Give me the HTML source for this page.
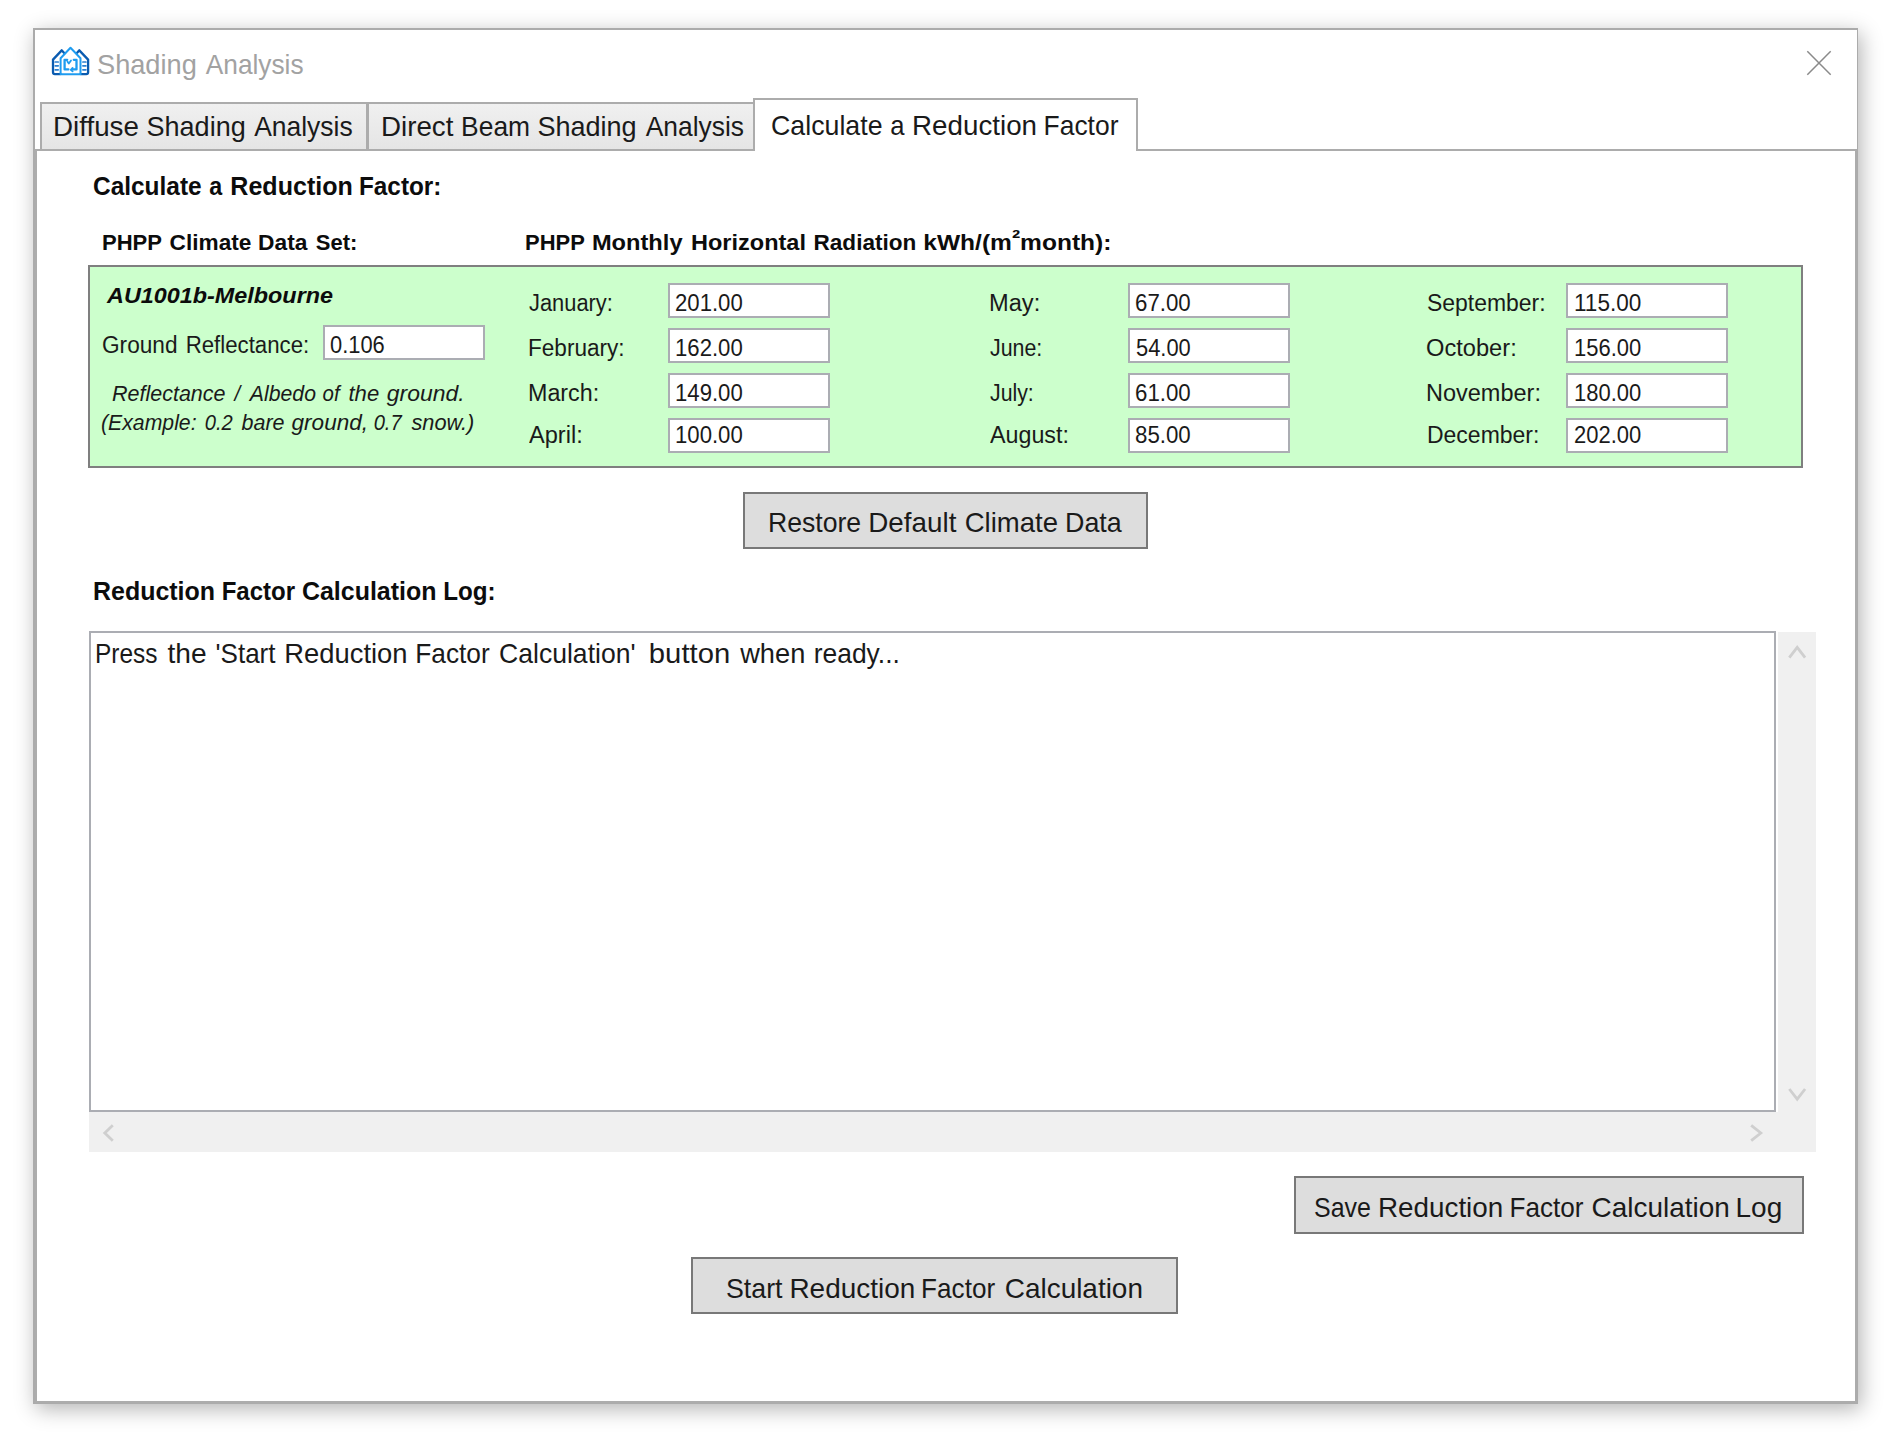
<!DOCTYPE html>
<html lang="en">
<head>
<meta charset="utf-8">
<title>Shading Analysis</title>
<style>
html,body{margin:0;padding:0}
body{width:1898px;height:1442px;background:#fff;position:relative;overflow:hidden;font-family:"Liberation Sans",sans-serif;color:#000}
body>*{position:absolute;box-sizing:border-box}
.t{white-space:nowrap;transform-origin:0 50%;display:block}
.t span{display:inline-block;transform-origin:0 50%}
.win{left:33px;top:28px;width:1825px;height:1376px;background:#fff;border:solid #ababab;border-width:2px 1px 1px 2px;box-shadow:3px 5px 20px rgba(0,0,0,.30)}
.pane{left:35px;top:149px;width:1822px;height:1254px;border:2px solid #acacac;background:#fff}
.tab{border:2px solid #acacac;background:linear-gradient(#f0f0f0,#e5e5e5)}
.tabsel{border:2px solid #acacac;border-bottom:none;background:#fff}
.green{left:88px;top:265px;width:1715px;height:203px;border:2px solid #7f7f7f;background:#ccffcc}
.in{border:2px solid #abadb3;background:#fff;width:162px;height:35px}
.btn{border:2px solid #787878;background:#dddddd}
.log{left:89px;top:631px;width:1687px;height:481px;border:2px solid #abadb3;background:#fff}
.sb{background:#f0f0f0}
</style>
</head>
<body>
<div class="win"></div>
<!-- title icon -->
<svg style="left:48px;top:44px" width="46" height="34" viewBox="48 44 46 34" fill="none" stroke-linejoin="round" stroke-linecap="round">
<path d="M61.7 50.4 L53 59.6 V72.2 Q53 74.1 54.9 74.1 H60.4 M64.2 53 L61.7 50.4" stroke="#0a5bb0" stroke-width="2.3"/>
<path d="M79.3 50.4 L88.1 59.6 V72.2 Q88.1 74.1 86.2 74.1 H80.7 M76.9 53 L79.3 50.4" stroke="#0a5bb0" stroke-width="2.3"/>
<path d="M55.2 62 H58.2 M55.2 65.8 H58.2 M55.2 69.8 H58.2 M82.9 62 H85.9 M82.9 65.8 H85.9 M82.9 69.8 H85.9" stroke="#2a7fd0" stroke-width="1.7"/>
<path d="M60.6 74.2 V58.2 L70.5 47.7 L80.5 58.2 V74.2 Z" stroke="#1f9cf0" stroke-width="2"/>
<path d="M67.2 59.8 H64.6 V69.4 H68.4 M73.8 59.8 H76.5 V69.4 H72.8" stroke="#1f9cf0" stroke-width="2.3"/>
<path d="M67.4 61.4 L68.8 63.6 L71 60.4 M72.6 68 L70.8 69.8 L72.6 71.4" stroke="#1f9cf0" stroke-width="1.8"/>
</svg>
<!-- close X -->
<svg style="left:1803px;top:47px" width="32" height="32" viewBox="1803 47 32 32" fill="none">
<path d="M1807.3 51.3 L1830.7 74.7 M1830.7 51.3 L1807.3 74.7" stroke="#8a8a8a" stroke-width="1.5"/>
</svg>
<!-- tabs -->
<div class="pane"></div>
<div class="tab" style="left:40px;top:102px;width:328px;height:49px"></div>
<div class="tab" style="left:367px;top:102px;width:388px;height:49px"></div>
<div style="left:37px;top:149px;width:716px;height:2px;background:#acacac"></div>
<div class="tabsel" style="left:753px;top:98px;width:385px;height:53px"></div>
<!-- green panel -->
<div class="green"></div>
<div class="in" style="left:323px;top:325px"></div>
<div class="in" style="left:668px;top:283px"></div>
<div class="in" style="left:668px;top:328px"></div>
<div class="in" style="left:668px;top:373px"></div>
<div class="in" style="left:668px;top:418px"></div>
<div class="in" style="left:1128px;top:283px"></div>
<div class="in" style="left:1128px;top:328px"></div>
<div class="in" style="left:1128px;top:373px"></div>
<div class="in" style="left:1128px;top:418px"></div>
<div class="in" style="left:1566px;top:283px"></div>
<div class="in" style="left:1566px;top:328px"></div>
<div class="in" style="left:1566px;top:373px"></div>
<div class="in" style="left:1566px;top:418px"></div>
<!-- buttons -->
<div class="btn" style="left:743px;top:492px;width:405px;height:57px"></div>
<div class="btn" style="left:1294px;top:1176px;width:510px;height:58px"></div>
<div class="btn" style="left:691px;top:1257px;width:487px;height:57px"></div>
<!-- log -->
<div class="log"></div>
<div class="sb" style="left:1778px;top:632px;width:38px;height:480px"></div>
<div class="sb" style="left:89px;top:1112px;width:1727px;height:40px"></div>
<svg style="left:1778px;top:632px" width="38" height="520" viewBox="1778 632 38 520" fill="none" stroke="#cfcfcf" stroke-width="2.8">
<path d="M1789.3 657.6 L1797.2 647.4 L1805.1 657.6"/>
<path d="M1789.3 1089 L1797.2 1099.2 L1805.1 1089"/>
</svg>
<svg style="left:89px;top:1113px" width="1727" height="39" viewBox="89 1113 1727 39" fill="none" stroke="#cfcfcf" stroke-width="2.8">
<path d="M112.8 1125.3 L104.8 1133 L112.8 1140.7"/>
<path d="M1751.2 1125.3 L1760.8 1133 L1751.2 1140.7"/>
</svg>
<span class="t" style="left:96.76px;top:48px;font-size:28.5px;line-height:32px;transform:scaleX(0.9376);color:#a2a2a2"><span style="transform:scaleX(1.0173)">Shading</span> <span style="transform:scaleX(0.9832);margin-left:3.59px">Analysis</span></span>
<span class="t" style="left:53.30px;top:110px;font-size:28.5px;line-height:32px;transform:scaleX(0.9488);color:#1a1a1a"><span style="transform:scaleX(1.0264)">Diffuse</span> <span style="margin-left:2.44px">Shading</span> <span style="transform:scaleX(0.9786);margin-left:0.84px">Analysis</span></span>
<span class="t" style="left:380.62px;top:110px;font-size:28.5px;line-height:32px;transform:scaleX(0.9422);color:#1a1a1a"><span style="transform:scaleX(1.0320)">Direct</span> <span style="transform:scaleX(0.9831);margin-left:2.66px">Beam</span> <span style="transform:scaleX(1.0072);margin-left:-1.28px">Shading</span> <span style="transform:scaleX(0.9824);margin-left:2.06px">Analysis</span></span>
<span class="t" style="left:771.25px;top:109px;font-size:28.5px;line-height:32px;transform:scaleX(0.9465);color:#1a1a1a"><span style="transform:scaleX(0.9919)">Calculate</span> <span style="transform:scaleX(0.9500);margin-left:-1.03px">a</span> <span style="transform:scaleX(1.0291);margin-left:-0.98px">Reduction</span> <span style="transform:scaleX(0.9789);margin-left:2.84px">Factor</span></span>
<span class="t" style="left:92.79px;top:172px;font-size:25.5px;line-height:28px;transform:scaleX(0.9603);font-weight:700;color:#0c0c0c"><span style="transform:scaleX(0.9977)">Calculate</span> <span style="transform:scaleX(0.9500);margin-left:0.97px">a</span> <span style="transform:scaleX(1.0235);margin-left:0.45px">Reduction</span> <span style="transform:scaleX(0.9925);margin-left:2.35px">Factor:</span></span>
<span class="t" style="left:102.01px;top:230px;font-size:22.5px;line-height:25px;transform:scaleX(0.9944);font-weight:700;color:#0c0c0c"><span style="transform:scaleX(0.9846)">PHPP</span> <span style="transform:scaleX(1.0117);margin-left:0.84px">Climate</span> <span style="transform:scaleX(1.0160);margin-left:0.71px">Data</span> <span style="transform:scaleX(0.9808);margin-left:3.82px">Set:</span></span>
<span class="t" style="left:524.55px;top:230px;font-size:22.5px;line-height:25px;transform:scaleX(1.0453);font-weight:700;color:#0c0c0c"><span style="transform:scaleX(0.9334)">PHPP</span> <span style="transform:scaleX(1.0056);margin-left:-3.21px">Monthly</span> <span style="margin-left:1.94px">Horizontal</span> <span style="transform:scaleX(0.9599);margin-left:0.60px">Radiation</span> <span style="transform:scaleX(1.0436);margin-left:-3.13px">kWh/(m<span style="position:relative;top:-4px">²</span>month):</span></span>
<span class="t" style="left:107.04px;top:283px;font-size:22.5px;line-height:25px;transform:scaleX(1.0389);font-weight:700;font-style:italic;color:#0c0c0c">AU1001b-Melbourne</span>
<span class="t" style="left:101.53px;top:332px;font-size:23px;line-height:26px;transform:scaleX(0.9731);color:#1a1a1a"><span style="transform:scaleX(1.0115)">Ground</span> <span style="transform:scaleX(0.9931);margin-left:2.97px">Reflectance:</span></span>
<span class="t" style="left:330.00px;top:332px;font-size:23px;line-height:26px;transform:scaleX(0.9513);color:#1a1a1a">0.106</span>
<span class="t" style="left:112.00px;top:381px;font-size:22.5px;line-height:25px;transform:scaleX(0.9573);font-style:italic;color:#1a1a1a"><span style="transform:scaleX(0.9978)">Reflectance</span> <span style="transform:scaleX(0.9500);margin-left:2.45px">/</span> <span style="transform:scaleX(0.9856);margin-left:3.50px">Albedo</span> <span style="transform:scaleX(0.9500);margin-left:0.29px">of</span> <span style="transform:scaleX(1.0266);margin-left:1.94px">the</span> <span style="transform:scaleX(1.0650);margin-left:2.67px">ground.</span></span>
<span class="t" style="left:101.06px;top:410px;font-size:22.5px;line-height:25px;transform:scaleX(0.9434);font-style:italic;color:#1a1a1a"><span>(Example:</span> <span style="transform:scaleX(0.9500);margin-left:2.13px">0.2</span> <span style="transform:scaleX(1.0119);margin-left:1.41px">bare</span> <span style="transform:scaleX(1.0627);margin-left:2.51px">ground,</span> <span style="transform:scaleX(0.9500);margin-left:4.16px">0.7</span> <span style="transform:scaleX(1.0266);margin-left:2.15px">snow.)</span></span>
<span class="t" style="left:528.75px;top:290px;font-size:23px;line-height:26px;transform:scaleX(0.9502);color:#1a1a1a">January:</span>
<span class="t" style="left:674.54px;top:290px;font-size:23px;line-height:26px;transform:scaleX(0.9627);color:#1a1a1a">201.00</span>
<span class="t" style="left:527.77px;top:335px;font-size:23px;line-height:26px;transform:scaleX(0.9814);color:#1a1a1a">February:</span>
<span class="t" style="left:674.54px;top:335px;font-size:23px;line-height:26px;transform:scaleX(0.9627);color:#1a1a1a">162.00</span>
<span class="t" style="left:527.74px;top:380px;font-size:23px;line-height:26px;transform:scaleX(1.0125);color:#1a1a1a">March:</span>
<span class="t" style="left:674.54px;top:380px;font-size:23px;line-height:26px;transform:scaleX(0.9627);color:#1a1a1a">149.00</span>
<span class="t" style="left:528.75px;top:422px;font-size:23px;line-height:26px;transform:scaleX(1.0243);color:#1a1a1a">April:</span>
<span class="t" style="left:674.54px;top:422px;font-size:23px;line-height:26px;transform:scaleX(0.9627);color:#1a1a1a">100.00</span>
<span class="t" style="left:988.97px;top:290px;font-size:23px;line-height:26px;transform:scaleX(1.0274);color:#1a1a1a">May:</span>
<span class="t" style="left:1135.03px;top:290px;font-size:23px;line-height:26px;transform:scaleX(0.9684);color:#1a1a1a">67.00</span>
<span class="t" style="left:990.00px;top:335px;font-size:23px;line-height:26px;transform:scaleX(0.9294);color:#1a1a1a">June:</span>
<span class="t" style="left:1136.00px;top:335px;font-size:23px;line-height:26px;transform:scaleX(0.9513);color:#1a1a1a">54.00</span>
<span class="t" style="left:990.00px;top:380px;font-size:23px;line-height:26px;transform:scaleX(0.9259);color:#1a1a1a">July:</span>
<span class="t" style="left:1135.03px;top:380px;font-size:23px;line-height:26px;transform:scaleX(0.9684);color:#1a1a1a">61.00</span>
<span class="t" style="left:990.00px;top:422px;font-size:23px;line-height:26px;transform:scaleX(1.0117);color:#1a1a1a">August:</span>
<span class="t" style="left:1135.03px;top:422px;font-size:23px;line-height:26px;transform:scaleX(0.9684);color:#1a1a1a">85.00</span>
<span class="t" style="left:1426.50px;top:290px;font-size:23px;line-height:26px;transform:scaleX(0.9978);color:#1a1a1a">September:</span>
<span class="t" style="left:1573.52px;top:290px;font-size:23px;line-height:26px;transform:scaleX(0.9798);color:#1a1a1a">115.00</span>
<span class="t" style="left:1426.47px;top:335px;font-size:23px;line-height:26px;transform:scaleX(1.0284);color:#1a1a1a">October:</span>
<span class="t" style="left:1573.54px;top:335px;font-size:23px;line-height:26px;transform:scaleX(0.9554);color:#1a1a1a">156.00</span>
<span class="t" style="left:1426.48px;top:380px;font-size:23px;line-height:26px;transform:scaleX(1.0219);color:#1a1a1a">November:</span>
<span class="t" style="left:1573.54px;top:380px;font-size:23px;line-height:26px;transform:scaleX(0.9554);color:#1a1a1a">180.00</span>
<span class="t" style="left:1426.50px;top:422px;font-size:23px;line-height:26px;transform:scaleX(0.9991);color:#1a1a1a">December:</span>
<span class="t" style="left:1573.54px;top:422px;font-size:23px;line-height:26px;transform:scaleX(0.9554);color:#1a1a1a">202.00</span>
<span class="t" style="left:767.59px;top:506px;font-size:28.5px;line-height:32px;transform:scaleX(0.9551);color:#1a1a1a"><span style="transform:scaleX(0.9774)">Restore</span> <span style="transform:scaleX(1.0217);margin-left:-2.58px">Default</span> <span style="transform:scaleX(1.0110);margin-left:2.80px">Climate</span> <span style="transform:scaleX(0.9868);margin-left:0.78px">Data</span></span>
<span class="t" style="left:93.28px;top:577px;font-size:25.5px;line-height:28px;transform:scaleX(0.9672);font-weight:700;color:#0c0c0c"><span style="transform:scaleX(1.0120)">Reduction</span> <span style="transform:scaleX(0.9734);margin-left:0.89px">Factor</span> <span style="transform:scaleX(1.0120);margin-left:-1.83px">Calculation</span> <span style="transform:scaleX(0.9804);margin-left:1.81px">Log:</span></span>
<span class="t" style="left:95.32px;top:637px;font-size:28.5px;line-height:32px;transform:scaleX(0.9419);color:#1a1a1a"><span style="transform:scaleX(0.9100)">Press</span> <span style="transform:scaleX(1.0489);margin-left:-4.09px">the</span> <span style="transform:scaleX(0.9697);margin-left:3.94px">'Start</span> <span style="transform:scaleX(1.0192);margin-left:-0.61px">Reduction</span> <span style="transform:scaleX(0.9790);margin-left:2.38px">Factor</span> <span style="transform:scaleX(0.9892);margin-left:0.40px">Calculation'</span> <span style="transform:scaleX(1.0900);margin-left:5.21px">button</span> <span style="transform:scaleX(1.0139);margin-left:9.66px">when</span> <span style="transform:scaleX(0.9849);margin-left:1.58px">ready...</span></span>
<span class="t" style="left:1314.05px;top:1191px;font-size:28.5px;line-height:32px;transform:scaleX(0.9537);color:#1a1a1a"><span style="transform:scaleX(0.9188)">Save</span> <span style="transform:scaleX(1.0243);margin-left:-6.17px">Reduction</span> <span style="transform:scaleX(0.9615);margin-left:1.97px">Factor</span> <span style="transform:scaleX(1.0277);margin-left:-2.34px">Calculation</span> <span style="transform:scaleX(1.0298);margin-left:1.88px">Log</span></span>
<span class="t" style="left:725.74px;top:1272px;font-size:28.5px;line-height:32px;transform:scaleX(0.9612);color:#1a1a1a"><span style="transform:scaleX(0.9760)">Start</span> <span style="transform:scaleX(1.0196);margin-left:-1.75px">Reduction</span> <span style="transform:scaleX(0.9528);margin-left:0.38px">Factor</span> <span style="transform:scaleX(1.0197);margin-left:-2.07px">Calculation</span></span>
</body>
</html>
